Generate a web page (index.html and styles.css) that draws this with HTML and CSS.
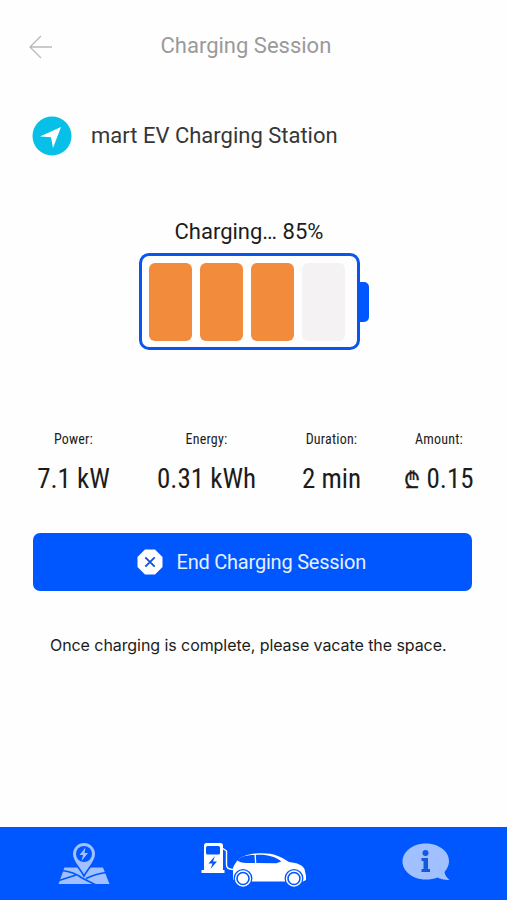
FILE: index.html
```html
<!DOCTYPE html>
<html lang="en">
<head>
<meta charset="utf-8">
<title>Charging Session</title>
<link rel="stylesheet" href="styles.css">
</head>
<body>
<div class="app">
  <header class="header">
    <svg class="back" viewBox="0 0 26 26"><path d="M24 13H2M13 2 2 13l11 11"/></svg>
    <h1 class="title">Charging Session</h1>
  </header>
  <main class="main">
    <section class="station">
      <svg class="nav-icon" viewBox="0 0 40 40"><circle cx="20" cy="20" r="19.5" fill="#08bfe8"/><path d="M29 11 8 20.500l11 .8L21 32z" fill="#fff"/></svg>
      <h2 class="station-name">mart EV Charging Station</h2>
    </section>
    <p class="status">Charging… 85%</p>
    <div class="battery">
      <div class="cells"><i class="cell"></i><i class="cell"></i><i class="cell"></i><i class="cell empty"></i></div>
      <div class="terminal"></div>
    </div>
    <section class="stats">
      <div class="stat"><span class="label">Power:</span><span class="value">7.1 kW</span></div>
      <div class="stat"><span class="label">Energy:</span><span class="value">0.31 kWh</span></div>
      <div class="stat"><span class="label">Duration:</span><span class="value">2 min</span></div>
      <div class="stat"><span class="label">Amount:</span><span class="value"><span class="lari">₾</span> 0.15</span></div>
    </section>
    <button class="end">
      <svg class="stop" viewBox="0 0 26 26"><path d="M8 .5h10L25.500 8v10L18 25.500H8L.5 18V8z" fill="#fff"/><path d="m8.300 8.300 9.400 9.400m0-9.400-9.400 9.400" stroke="#1254d8" stroke-width="1.900"/></svg>
      <span>End Charging Session</span>
    </button>
    <p class="note">Once charging is complete, please vacate the space.</p>
  </main>
  <nav class="tabs">
    <svg class="tab map" viewBox="0 0 52 44">
      <path fill="#a0c0ff" d="M6.500 25.500H45L51.500 42H.5z"/>
      <path d="M4 28.500c9 1 14 3 20 7.500l14 7M1 38.500 18 33M28 36.500c7-3 11-5 20-6" fill="none" stroke="#0057ff" stroke-width="1.700"/>
      <path fill="#a0c0ff" stroke="#0057ff" stroke-width="1.600" d="M26 .2c6.500 0 11.800 5.300 11.800 11.800C37.800 20 31 25 26 34 21 25 14.200 20 14.200 12 14.200 5.500 19.500.2 26 .2z"/>
      <circle cx="26" cy="12" r="8" fill="#0057ff"/>
      <path d="m27.500 5.500-6 7.500h3.500l-1.500 6 6.500-8h-3.500z" fill="#a0c0ff"/>
    </svg>
    <svg class="tab car" viewBox="0 0 106 46">
      <path fill="#fff" d="M3 3.500Q3 1 5.500 1h14Q22 1 22 3.500V28h1.500v3H.5v-3H3z"/>
      <rect x="5" y="4" width="14" height="8.500" rx="1.500" fill="#0057ff"/>
      <path fill="#0057ff" d="m14 14-6.500 7.500h4L9.500 27l6.500-7.500h-4z"/>
      <path d="M22 6.500 25.500 9v14c0 3 3 4.500 7 4.500" fill="none" stroke="#fff" stroke-width="1.400"/>
      <path fill="#fff" d="M32 26c1-3 2-4 4-7 4-5 11-7.300 22-7.800 14-.5 22 3 30 8.800 9 1 13 3 15.500 7l1.500 7v4l-3 1.500H38l-6-2z"/>
      <path fill="#0057ff" d="M41 15c4-1.500 8-2 12.500-2l.5 8h-9c-4 0-7-1-9-3zM54.800 13c11-.7 19 1.500 25.500 6.500l-5 1.800-20-.3z"/>
      <g fill="#fff" stroke="#0057ff" stroke-width="1.300"><circle cx="42" cy="36.500" r="8.800"/><circle cx="93" cy="36.500" r="8.800"/></g>
      <g fill="#fff" stroke="#0057ff" stroke-width="1.600"><circle cx="42" cy="36.500" r="6"/><circle cx="93" cy="36.500" r="6"/></g>
    </svg>
    <svg class="tab info" viewBox="0 0 48 38">
      <path fill="#a0c0ff" d="M23.500.5C36.500.5 47 8 47 18c0 5-2.500 8.500-4.500 11 .5 3 2 5.500 5 8-5 .2-9-1-12-2.500C32 36 28 36.500 23.500 36.500 10.500 36.500.5 28 .5 18.500S10.500.5 23.500.5z"/>
      <g fill="#1458db"><circle cx="23.500" cy="10" r="3"/><path d="M19.500 15H26v11h2v3h-8.500v-3h2v-8h-2z"/></g>
    </svg>
  </nav>
</div>
</body>
</html>
```
FILE: styles.css
```css
* { box-sizing: border-box; }
body { margin: 0; background: #fefefe; font-family: Roboto, "Liberation Sans", sans-serif; color: #1c1c1c; }
.app { height: 900px; display: flex; flex-direction: column; overflow: hidden; }
.header { display: grid; grid-template-columns: 132.5px 1fr; align-items: center; height: 92px; padding-left: 28px; }
.back { width: 26px; height: 26px; margin-top: 2px; fill: none; stroke: #b9b9b9; stroke-width: 1.3; }
.title { margin: 0; font-size: 22px; line-height: 26px; font-weight: 400; color: #9a9a9a; }
.main { flex: 1; display: flex; flex-direction: column; }
.station { display: flex; align-items: center; gap: 19px; height: 40px; margin: 24px 0 0 32px; }
.nav-icon { width: 40px; height: 40px; }
.station-name { margin: 0; font-size: 22px; line-height: 26px; font-weight: 400; color: #363636; }
.status { margin: 63px 0 8px; padding-left: 174.5px; font-size: 22px; line-height: 26px; white-space: nowrap; }
.battery { display: flex; align-items: center; margin-left: 138.5px; }
.cells { display: grid; grid-template-columns: repeat(4, 43px); gap: 8.3px; width: 221px; height: 97px; padding: 7px 0 6px 7px; border: 3.500px solid #0b55ea; border-radius: 10px; }
.cell { background: #f38b3c; border-radius: 6px; }
.empty { background: #f4f2f3; }
.terminal { width: 9px; height: 40px; background: #0057ff; border-radius: 0 5px 5px 0; }
.stats { display: grid; grid-template-columns: 107px 159px 91px 124px; margin: 79px 0 0 20px; }
.stat { display: flex; flex-direction: column; align-items: center; font-family: "Roboto Condensed", Roboto, sans-serif; font-stretch: 75%; white-space: nowrap; }
.label { font-size: 14px; line-height: 20px; letter-spacing: .2px; }
.value { margin-top: 13px; font-size: 27px; line-height: 34px; }
.lari { display: inline-block; width: 16px; font-size: 23px; line-height: 20px; transform: scaleX(.9); transform-origin: left; -webkit-text-stroke: .3px; }
.end { display: flex; align-items: center; gap: 13.5px; width: 439px; height: 58px; margin: 37px 0 0 33px; padding: 0 0 0 104px; border: 0; border-radius: 7px; background: #0057ff; color: #e6f0ff; font: 400 20px Roboto, sans-serif; letter-spacing: -.22px; }
.stop { width: 26px; height: 26px; }
.note { margin: 44px 0 0 50px; font: 400 16px/20px Inter, sans-serif; letter-spacing: -.07px; white-space: nowrap; }
.tabs { display: flex; height: 73px; padding: 15px 0 0 58px; background: #0057ff; }
.tab { display: block; flex: none; }
.map { width: 52px; height: 44px; }
.car { width: 106px; height: 46px; margin-left: 91px; }
.info { width: 48px; height: 38px; margin: 1px 0 0 95px; }
```
